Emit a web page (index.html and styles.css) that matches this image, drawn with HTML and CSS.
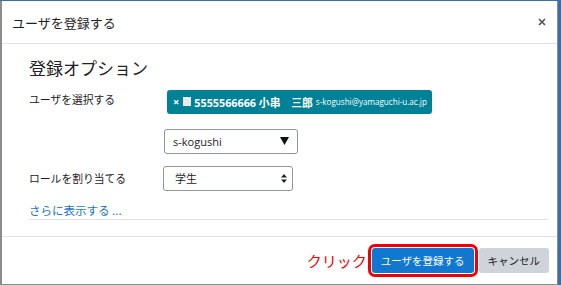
FILE: index.html
```html
<!DOCTYPE html>
<html lang="ja">
<head>
<meta charset="utf-8">
<title>ユーザを登録する</title>
<link rel="stylesheet" href="styles.css">
</head>
<body>
<div class="modal">
  <div class="modal-header">
    <h5 class="modal-title">ユーザを登録する</h5>
    <span class="close-btn" aria-label="閉じる">
      <svg width="8" height="8" viewBox="0 0 8 8"><path d="M1 1L7 7M7 1L1 7" stroke="#555" stroke-width="1.7"/></svg>
    </span>
  </div>
  <div class="modal-body">
    <h4 class="section-title">登録オプション</h4>
    <div class="form-row row-user">
      <div class="form-label">ユーザを選択する</div>
      <div class="form-control-col">
        <span class="badge">
          <span class="badge-x">×</span>
          <span class="badge-pic"></span>
          <span class="badge-name">5555566666 小串　三郎</span>
          <span class="badge-mail">s-kogushi@yamaguchi-u.ac.jp</span>
        </span>
      </div>
    </div>
    <div class="form-row row-search">
      <div class="form-label"></div>
      <div class="form-control-col">
        <div class="select select-search">
          <span class="select-text">s-kogushi</span>
          <svg class="tri" width="9" height="8" viewBox="0 0 9 8"><path d="M0 0H9L4.5 8Z" fill="#111"/></svg>
        </div>
      </div>
    </div>
    <div class="form-row row-role">
      <div class="form-label">ロールを割り当てる</div>
      <div class="form-control-col">
        <div class="select select-role">
          <span class="select-text role-text">学生</span>
          <svg class="updown" width="6" height="9" viewBox="0 0 6 9"><path d="M3 0L6 3.5H0Z M3 9L0 5.5H6Z" fill="#222"/></svg>
        </div>
      </div>
    </div>
    <div class="more-row">
      <a class="more-link">さらに表示する ...</a>
    </div>
  </div>
  <div class="modal-footer">
    <span class="note">クリック</span>
    <button class="btn btn-primary">ユーザを登録する</button>
    <button class="btn btn-secondary">キャンセル</button>
  </div>
</div>
</body>
</html>
```
FILE: styles.css
```css
html, body {
  margin: 0;
  padding: 0;
}
body {
  background: #3c6ea6;
  width: 561px;
  height: 285px;
  overflow: hidden;
  font-family: "Open Sans", "Noto Sans CJK JP", sans-serif;
  color: #1d2125;
}
.modal {
  margin-top: 1px;
  width: 555px;
  height: 283px;
  background: #fff;
  border-left: 2px solid #8c8c8c;
  border-right: 1px solid #8c8c8c;
  border-bottom: 1px solid #8c8c8c;
  display: flex;
  flex-direction: column;
  box-sizing: content-box;
}
.modal-header {
  height: 42px;
  border-bottom: 1px solid #dee2e6;
  display: flex;
  align-items: center;
  justify-content: space-between;
  padding: 0 11px 0 10px;
}
.modal-title {
  margin: 0;
  font-family: "Noto Sans CJK JP", sans-serif;
  font-weight: 400;
  font-size: 13px;
  color: #1d2125;
}
.close-btn {
  display: flex;
  width: 8px;
  height: 8px;
}
.modal-body {
  flex: 1;
  padding: 12px 9px 0 27px;
  display: flex;
  flex-direction: column;
}
.section-title {
  margin: 0;
  font-family: "Noto Sans CJK JP", sans-serif;
  font-weight: 400;
  font-size: 17px;
  line-height: 24px;
  color: #1d2125;
}
.form-row {
  display: flex;
  align-items: center;
}
.form-label {
  width: 135px;
  flex: none;
  font-family: "Noto Sans CJK JP", sans-serif;
  font-size: 10.8px;
  line-height: 20px;
  color: #1d2125;
}
.row-user {
  margin-top: 9px;
  align-items: flex-start;
}
.row-search {
  margin-top: 15px;
}
.row-role {
  margin-top: 12px;
}
.badge {
  display: inline-flex;
  align-items: center;
  height: 24px;
  margin-left: 3px;
  padding: 0 5px 0 6px;
  background: #008196;
  color: #fff;
  border-radius: 3px;
  white-space: nowrap;
}
.badge-x {
  font-size: 11px;
  font-weight: 700;
  margin-right: 4px;
}
.badge-pic {
  width: 8px;
  height: 9px;
  background: #e9ecef;
  margin-right: 3px;
}
.badge-name {
  font-family: "Open Sans", "Noto Sans CJK JP", sans-serif;
  font-weight: 700;
  font-size: 10.8px;
  margin-right: 3px;
}
.badge-mail {
  font-size: 8.1px;
  font-weight: 400;
}
.select {
  box-sizing: border-box;
  height: 25px;
  border: 1px solid #8f959e;
  border-radius: 3px;
  display: flex;
  align-items: center;
  justify-content: space-between;
  background: #fff;
}
.select-search {
  width: 134px;
  padding: 0 8px 0 8px;
}
.select-role {
  width: 130px;
  margin-left: -1px;
  padding: 0 5px 0 11px;
}
.select-text {
  font-size: 11px;
  color: #1d2125;
}
.role-text {
  font-family: "Noto Sans CJK JP", sans-serif;
}
.tri {
  display: block;
}
.updown {
  display: block;
}
.more-row {
  margin-top: 12px;
  padding-bottom: 2px;
  border-bottom: 1px solid #dee2e6;
  line-height: 13px;
}
.more-link {
  font-family: "Noto Sans CJK JP", sans-serif;
  font-size: 11.5px;
  color: #1a74d0;
  text-decoration: none;
}
.modal-footer {
  border-top: 1px solid #dee2e6;
  height: 48px;
  box-sizing: border-box;
  display: flex;
  justify-content: flex-end;
  align-items: flex-start;
  padding: 11px 8px 0 0;
}
.note {
  font-family: "Noto Sans CJK JP", sans-serif;
  font-size: 15px;
  line-height: 25px;
  color: #f00000;
  margin-right: 5px;
}
.btn {
  height: 25px;
  border: none;
  border-radius: 3px;
  padding: 0 9px;
  font-family: "Noto Sans CJK JP", sans-serif;
  font-size: 10.5px;
  line-height: 25px;
}
.btn-primary {
  background: #1177d1;
  color: #fff;
  box-shadow: 0 0 0 1px #fff, 0 0 0 4px #f00000;
  border-radius: 3px;
}
.btn-secondary {
  background: #ced4da;
  color: #1d2125;
  margin-left: 5px;
}
```
